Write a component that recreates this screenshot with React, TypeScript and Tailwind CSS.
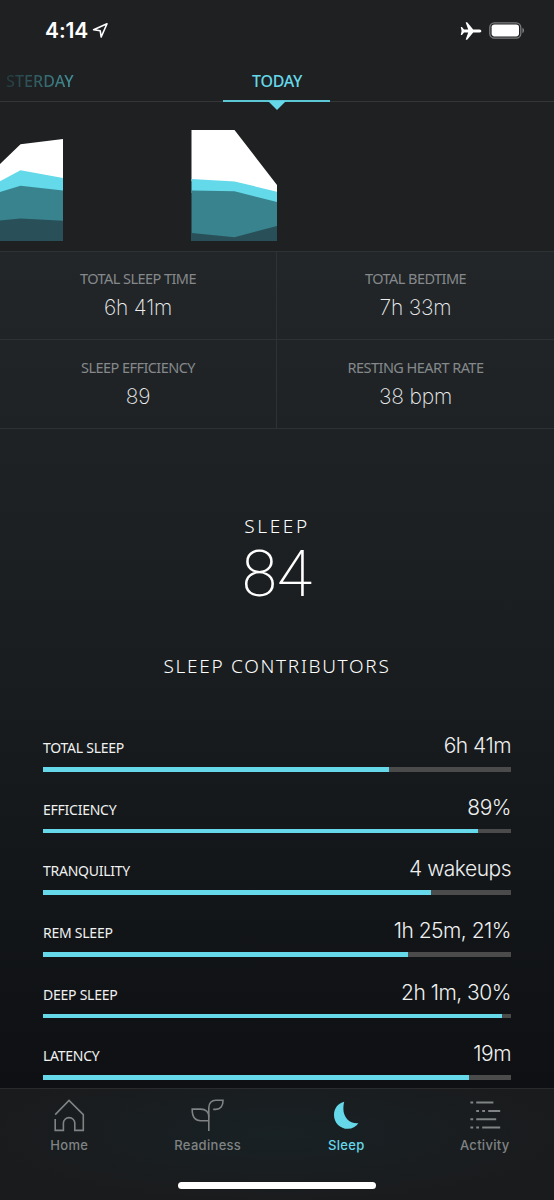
import type { ReactNode } from "react";

interface StatProps {
  label: string;
  value: string;
  className?: string;
}

interface ContributorProps {
  label: string;
  value: string;
  percent: number;
}

interface NavItemProps {
  label: string;
  icon: ReactNode;
  active?: boolean;
}

const contributors: ContributorProps[] = [
  { label: "TOTAL SLEEP", value: "6h 41m", percent: 74 },
  { label: "EFFICIENCY", value: "89%", percent: 93 },
  { label: "TRANQUILITY", value: "4 wakeups", percent: 83 },
  { label: "REM SLEEP", value: "1h 25m, 21%", percent: 78 },
  { label: "DEEP SLEEP", value: "2h 1m, 30%", percent: 98 },
  { label: "LATENCY", value: "19m", percent: 91 },
];

const LocationIcon = () => (
  <svg width="17" height="17" viewBox="0 0 17 17" fill="none">
    <path
      d="M1.6 7.8 15 1.8 9.2 15 8.2 8.7Z"
      stroke="white"
      strokeWidth="1.6"
      strokeLinejoin="round"
    />
  </svg>
);

const PlaneIcon = () => (
  <svg width="22" height="18" viewBox="0 0 22 18" fill="white">
    <path d="M19.5 7.4C21.2 7.6 21.3 8.5 21.3 9s-.1 1.4-1.8 1.6h-6.3L7.4 17.5c-.3.3-1.9.5-1.6-.3l2.4-6.6H4L2.2 12.8c-.2.3-1.5.4-1.4-.1L1.6 9 .8 5.3c-.1-.5 1.2-.4 1.4-.1L4 7.4h4.2L5.8.8C5.5 0 7.1.2 7.4.5l5.8 6.9Z" />
  </svg>
);

const BatteryIcon = () => (
  <svg width="36" height="17" viewBox="0 0 36 17">
    <rect x=".8" y=".8" width="31" height="15.4" rx="4.6" fill="none" stroke="#7c7d7e" strokeWidth="1.3" />
    <rect x="2.6" y="2.6" width="27.4" height="11.8" rx="2.8" fill="white" />
    <path d="M33.4 5.8c2.2.7 2.2 4.7 0 5.4Z" fill="#7c7d7e" />
  </svg>
);

const HomeIcon = () => (
  <svg width="36" height="36" viewBox="0 0 36 36" fill="none" stroke="currentColor" strokeWidth="1.6">
    <path d="M4.2 17.6 18 3.4l14.3 14.3v15.7h-8.5v-7.1a5.7 5.7 0 0 0-11.4 0v7.1H4.2V22" />
  </svg>
);

const LeafIcon = () => (
  <svg width="36" height="36" viewBox="0 0 36 36" fill="none" stroke="currentColor" strokeWidth="1.6">
    <path d="M18.8 34V10.8c0-4.8 2.8-7.6 7-7.6h7.2c.2 6-2.7 9.2-7.2 9.2h-2.6" />
    <path d="M18.8 23.7H10.6c-5.2 0-8.5-3.2-8.4-11.6h8.6c4.9 0 8 3 8 7.6" />
  </svg>
);

const MoonIcon = () => (
  <svg width="36" height="36" viewBox="0 0 36 36" fill="currentColor">
    <path d="M16.2 4.8C10.2 6 6 11.4 6 17.9c0 8 6.3 13.9 13.8 13.9 4.5 0 8.3-2 10.6-5.5-9 .6-15-6-15-14.3 0-2.9.2-4.8.8-7.2Z" />
  </svg>
);

const ActivityIcon = () => (
  <svg width="36" height="36" viewBox="0 0 36 36" fill="none" stroke="currentColor" strokeWidth="2">
    <path d="M3.4 5.6h2.8M9.2 5.6h17.2M9.2 14h2.8M15.2 14H18M21.2 14h12M3.4 22.3h2.8M9.2 22.3h20M3.4 30.6h2.8M9.2 30.6H12M15.2 30.6h18" />
  </svg>
);

const SleepChart = () => (
  <svg className="block" width="554" height="149" viewBox="0 102 554 149">
    <path d="M0 164 20.5 144.2 63 139v42L20.5 173.2 0 184.3Z" fill="#fff" />
    <path d="M0 181.3 20.5 170.2 63 178v15L20.5 189 0 195Z" fill="#63d9ea" />
    <path d="M0 192 20.5 185.8 63 190.5V241H0Z" fill="#38838d" />
    <path d="M0 220.5 20.5 218.6 63 220.7V241H0Z" fill="#294f59" />
    <path d="M191.5 130h43L277 185v9l-42.5-10.3-43-2.4Z" fill="#fff" />
    <path d="M191.5 179 234.5 181.4 277 191.7V205l-42.5-11-43-1Z" fill="#63d9ea" />
    <path d="M191.5 190.5 234.5 191.2 277 202v39h-85.5Z" fill="#38838d" />
    <path d="M191.5 233 234.5 237.3 277 226v15h-85.5Z" fill="#294f59" />
  </svg>
);

function Stat({ label, value, className = "" }: StatProps) {
  return (
    <div className={`flex flex-col items-center border-b border-[#2d3335] ${className}`}>
      <div className="font-['Noto_Sans'] text-[14.5px] leading-5 tracking-[-0.55px] text-[#85898b]">{label}</div>
      <div className="mt-[6px] text-[21px] leading-7 font-extralight tracking-[-0.2px] text-[#eceeef]">{value}</div>
    </div>
  );
}

function Contributor({ label, value, percent }: ContributorProps) {
  return (
    <div className="h-[61.7px]">
      <div className="flex h-[35px] items-baseline justify-between">
        <span className="font-['Noto_Sans'] text-[14px] leading-6 tracking-[-0.25px] text-[#f0f1f1]">{label}</span>
        <span className="text-[21px] leading-7 font-light tracking-[-0.5px] text-[#eef0f0]">{value}</span>
      </div>
      <div className="h-[4.5px] bg-[#4b4b4c]">
        <div className="h-full bg-[#65d8e9]" style={{ width: `${percent}%` }} />
      </div>
    </div>
  );
}

function NavItem({ label, icon, active }: NavItemProps) {
  return (
    <div className={`flex flex-1 flex-col items-center ${active ? "text-[#65d8e9]" : "text-[#7f8384]"}`}>
      {icon}
      <span className="mt-[2px] text-[13px] leading-5 font-medium tracking-[0.3px]">{label}</span>
    </div>
  );
}

export default function App() {
  return (
    <div className="flex h-[1200px] w-[554px] flex-col overflow-hidden bg-[#1e2022] font-[Inter,sans-serif] text-white">
      <header className="flex h-[61px] shrink-0 items-center justify-between pr-[29px] pl-[45px]">
        <div className="flex items-center gap-1">
          <span className="text-[21px] font-semibold tracking-[-0.1px]">4:14</span>
          <LocationIcon />
        </div>
        <div className="flex items-center gap-[7px]">
          <PlaneIcon />
          <BatteryIcon />
        </div>
      </header>

      <nav className="grid h-[41px] shrink-0 grid-cols-[223px_107px_1fr] font-['Noto_Sans'] text-[16px] font-medium tracking-[-0.3px]">
        <div className="border-b border-[#343638] pt-[8px] pl-[6px]">
          <span className="bg-linear-to-r from-[#23383c] to-[#439299] bg-clip-text tracking-[0.1px] text-transparent">
            STERDAY
          </span>
        </div>
        <div className="relative border-b-2 border-[#5cc7d5] pt-[8px] pl-px text-center text-[#65d8e9]">
          TODAY
          <svg className="absolute top-[40px] left-[45px]" width="18" height="9" viewBox="0 0 18 9">
            <path d="M0 0h18L9 9Z" fill="#65d8e9" />
          </svg>
        </div>
        <div className="border-b border-[#343638]" />
      </nav>

      <div className="h-[149px] shrink-0">
        <SleepChart />
      </div>

      <main className="flex min-h-0 flex-1 flex-col bg-linear-to-b from-[#222629] via-[#191d1f] to-[#0e1013]">
        <section className="grid shrink-0 grid-cols-[277px_277px] grid-rows-[88px_89px] border-t border-[#2d3335]">
          <Stat label="TOTAL SLEEP TIME" value="6h 41m" className="border-r pt-[16px]" />
          <Stat label="TOTAL BEDTIME" value="7h 33m" className="pt-[16px]" />
          <Stat label="SLEEP EFFICIENCY" value="89" className="border-r pt-[17px]" />
          <Stat label="RESTING HEART RATE" value="38 bpm" className="pt-[17px]" />
        </section>

        <section className="flex shrink-0 flex-col items-center pt-[87px]">
          <h2 className="font-['Noto_Sans'] text-[19px] leading-5 font-light tracking-[2.6px]">SLEEP</h2>
          <div className="mt-[13px] font-[Roboto] text-[64px] leading-[52px] font-[200]">84</div>
          <h3 className="mt-[51px] font-['Noto_Sans'] text-[19px] leading-7 font-light tracking-[1.7px]">
            SLEEP CONTRIBUTORS
          </h3>
        </section>

        <section className="mt-[52px] min-h-0 flex-1 overflow-hidden px-[43px]">
          {contributors.map((item) => (
            <Contributor key={item.label} {...item} />
          ))}
        </section>
      </main>

      <footer className="flex h-[112px] shrink-0 flex-col items-center border-t border-[#292b2c] bg-[radial-gradient(ellipse_at_50%_40%,#182124,#1a1b1d_75%)] pt-[8px]">
        <div className="flex w-full">
          <NavItem label="Home" icon={<HomeIcon />} />
          <NavItem label="Readiness" icon={<LeafIcon />} />
          <NavItem label="Sleep" icon={<MoonIcon />} active />
          <NavItem label="Activity" icon={<ActivityIcon />} />
        </div>
        <div className="mt-[27px] h-[7px] w-[198px] rounded-full bg-white" />
      </footer>
    </div>
  );
}
